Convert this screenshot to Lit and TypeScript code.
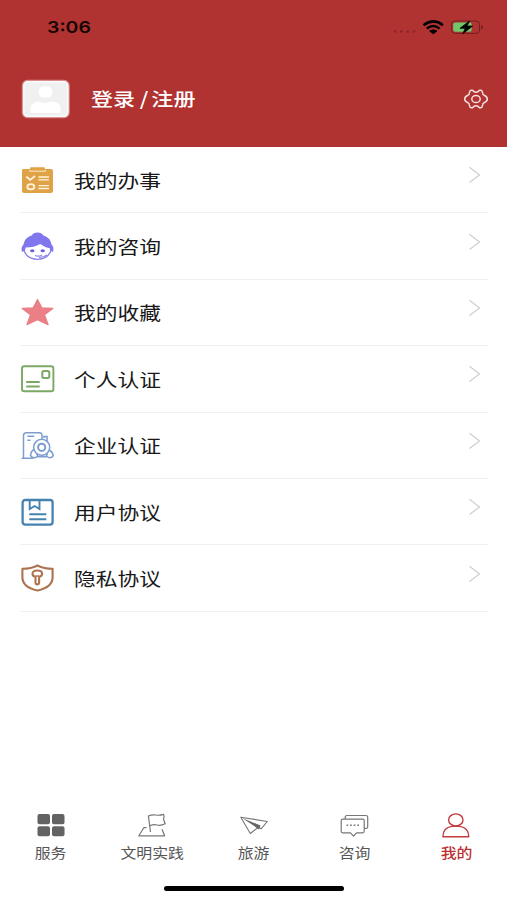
import { LitElement, html, svg, css } from "lit";
import { customElement, property } from "lit/decorators.js";

const rowIcons: Record<string, unknown> = {
  tasks: svg`<path fill="#dfa247" d="M3 4h7v2h15V4h6q2 0 2 2v20q0 2-2 2H4q-2 0-2-2V6q0-2 1-2z"/>
    <rect x="10" y="2.2" width="15" height="3.600" rx="1" fill="#dfa247"/>
    <path d="M9.500 5v1.500h16V5" fill="none" stroke="#f6dfb8" stroke-width=".8"/>
    <g fill="none" stroke="#fff3dc" stroke-width="1.800"><path d="M6.200 11.500l4 3.400L15 11"/><ellipse cx="10.800" cy="21.800" rx="3.500" ry="2.600"/>
    <path stroke-width="1.300" d="M18.500 12h10.500M18.500 14.900h10.500M18.500 20.600h10.500M18.500 23.500h10.500"/></g>`,
  advisor: svg`<path d="M4.500 17v4q1 1 2 3 4 4.300 11 4.300T28.500 24q1-2 2-3v-4" fill="#fff" stroke="#8b82ea" stroke-width="1.200"/>
    <path fill="#8076ee" d="M2 20.800Q.6 16.500 3.500 13.500 4.500 6.500 12 4.200 13.200 1.400 17.500 1.400T23 4.200Q30.500 6.500 31.500 13.500q2.900 3 1.500 7.300-2.300.2-2.800-3.300-5.200-1-10-4.500Q14 16.500 5.600 16.500 5 21 2 20.800z"/>
    <g fill="#6a5fe0"><ellipse cx="12.300" cy="19.700" rx="2.200" ry="1.500"/><ellipse cx="22.700" cy="19.700" rx="2.200" ry="1.500"/></g>
    <path d="M15 24.500q3.500 1.600 7-.6M19 26.500q5-.3 8-2.500" fill="none" stroke="#8b82ea" stroke-width="1.200"/>`,
  star: svg`<path fill="#ea7f86" stroke="#ea7f86" stroke-width="1.200" stroke-linejoin="round" d="M17.500 2.400l4.300 8.400 11 .6-8.300 6.400 3.600 9.800-10.600-4.800L6.900 27.600l3.600-9.800-8.300-6.400 11-.6z"/>`,
  card: svg`<g fill="none" stroke="#7ca765"><rect x="2" y="2.300" width="31.400" height="25" rx="2.300" stroke-width="1.900"/>
    <rect x="22.300" y="7" width="7" height="7" rx="1.700" stroke-width="2"/><path stroke-width="1.900" d="M6.200 18h13.500M6.200 22.500h13.500"/></g>`,
  company: svg`<g fill="none" stroke="#7c9dce" stroke-width="1.500"><path d="M1.700 28.300h11.500M3.500 28V5.500Q3.500 2.800 6.500 2.800h13q2.500 0 2.500 3.200v3M7.300 6.300h7M7.300 10.300h3.200M24 8V6.500h3V11"/>
    <circle cx="21.700" cy="17.300" r="8" fill="#fff"/><circle cx="21.700" cy="17.300" r="3.600" stroke-width="2"/>
    <path d="M14 19.500q-3 1.500-3.500 6 2.500 3.800 6.700 1.200.8-1.500-.7-3M29.300 20q3.500 2 4 5.800-2.800 3.500-6.500.7-.6-1.500.7-3M17.500 26.800h9"/></g>`,
  book: svg`<g fill="none" stroke="#4682b0"><rect x="2.600" y="3" width="30" height="24.600" rx="2.500" stroke-width="2.300"/>
    <path stroke-width="1.900" d="M9.700 3.500v8.500l4.900-3 4.900 3V3.500"/><path stroke-width="1.900" d="M9.300 17.300h17M9.300 22.200h17"/></g>`,
  shield: svg`<g fill="none" stroke="#ad7350"><path stroke-width="2.100" stroke-linejoin="round" d="M17.500 2.500Q11 5.800 2.400 5.800v8.400q0 10 15.100 13.300 15.100-3.300 15.100-13.300V5.800q-8.600 0-15.100-3.300z"/>
    <path stroke-width="2.100" stroke-linejoin="round" d="M15.500 14q-3-.8-3-3.200 0-3.300 4.800-3.300t4.800 3.300q0 2.400-3 3.200v6q-.3 1.400-1.800 1.400t-1.800-1.400z"/><path stroke-width="1.500" d="M15.300 13h4"/></g>`,
};

const tabIcons: Record<string, unknown> = {
  grid: svg`<g fill="#636363"><rect x="2.500" y="2" width="12.500" height="10.300" rx="2"/><rect x="17" y="2" width="12.500" height="10.300" rx="2"/><rect x="2.500" y="14.300" width="12.500" height="10" rx="2"/><rect x="17" y="14.300" width="12.500" height="10" rx="2"/></g>`,
  flag: svg`<g fill="none" stroke="#777" stroke-width="1.200" stroke-linejoin="round"><path d="M14.500 20L12.400 4Q16 2.300 19.500 3t8.200-.6q.7 2.700-.2 4.800l1.700 4.600Q24.500 14 21 13t-7.300 1"/><path d="M10.500 15.700H7.800L2.800 23.800h25.800L26 17.300"/></g>`,
  plane: svg`<g fill="none" stroke="#777" stroke-width="1.100" stroke-linejoin="round"><path d="M2.800 5.200l26.500 4.300-6 7.200-3.300-1.200-7.700 6z"/></g><path d="M4 5.900l18.500 7.600-1.500 4-7-5z" fill="#666"/>`,
  chat: svg`<g fill="none" stroke="#777" stroke-width="1.200" stroke-linejoin="round"><path d="M3.700 7.200h20q1.500 0 1.500 1.500v10.600q0 1.500-1.500 1.500h-6.200l-3 3.300-3-3.300H3.700q-1.500 0-1.500-1.500V8.700q0-1.500 1.500-1.500zM6.200 7V5.300q0-1.800 2-1.800h18.600q1.900 0 1.900 1.600v9.800q0 1.500-1.900 1.500h-1.400"/></g><path d="M7.500 13.300h13" stroke="#777" stroke-width="1.600" stroke-dasharray="1.700 1.900"/>`,
  person: svg`<g fill="none" stroke="#c03c3f" stroke-width="1.400" stroke-linejoin="round"><ellipse cx="15.800" cy="7.900" rx="7.200" ry="6"/><path d="M2.900 24.700Q3 15.500 11.800 14.400h8Q28.600 15.500 28.800 24.700z"/></g>`,
};

@customElement("menu-row")
class MenuRow extends LitElement {
  @property() icon = "";
  @property() label = "";
  static styles = css`
    :host { display: flex; height: 66.4px; box-sizing: border-box; border-bottom: 1px solid #f0f0f0; align-items: center; }
    .icon { flex: none; width: 34px; height: 30px; overflow: visible; }
    .label { flex: 1; margin-left: 20px; font-size: 18.5px; line-height: 28px; color: #181818; white-space: nowrap; }
    .stretch { display: inline-block; transform: scaleX(1.176); transform-origin: left; }
    .chevron { width: 14px; height: 18px; margin: 0 6px 9px 0; }
  `;
  render() {
    return html`<svg class="icon" viewBox="0 0 34 30">${rowIcons[this.icon]}</svg>
      <div class="label"><span class="stretch">${this.label}</span></div>
      <svg class="chevron" viewBox="0 0 14 18"><path d="M1.500 1.200L11.500 9 1.500 16.600" fill="none" stroke="#cfcfcf" stroke-width="1.200"/></svg>`;
  }
}

@customElement("tab-item")
class TabItem extends LitElement {
  @property() icon = "";
  @property() label = "";
  static styles = css`
    :host { display: flex; flex: 1; flex-direction: column; align-items: center; color: #555; }
    :host([active]) { color: #bd3034; }
    svg { width: 32px; height: 27px; }
    .label { font-size: 13.6px; line-height: 20px; margin-top: 3px; white-space: nowrap; transform: scaleX(1.17); }
    :host([active]) .label { font-weight: 500; }
  `;
  render() {
    return html`<svg viewBox="0 0 32 27">${tabIcons[this.icon]}</svg><div class="label">${this.label}</div>`;
  }
}

@customElement("app-root")
class AppRoot extends LitElement {
  static styles = css`
    :host { display: flex; flex-direction: column; width: 507px; height: 900px; overflow: hidden; background: #fff; font-family: "Noto Sans CJK SC", sans-serif; }
    .top { height: 147px; flex: none; background: #b03331; }
    .status { height: 54px; display: flex; align-items: center; justify-content: space-between; padding: 0 25px 0 46.500px; box-sizing: border-box; }
    .time { font: 600 16.5px/20px Inter, sans-serif; color: #160504; transform: scaleX(1.18); transform-origin: left; }
    .signals { width: 92px; height: 20px; overflow: visible; }
    .profile { display: flex; align-items: center; height: 89px; padding: 0 18px 0 21px; }
    .avatar { width: 50px; height: 40px; }
    .login { flex: 1; margin: 0 0 2px 20px; color: #fff; font-size: 18.5px; line-height: 28px; font-weight: 500; white-space: nowrap; }
    .stretch { display: inline-block; transform: scaleX(1.19); transform-origin: left; }
    .slash { margin: 0 2.500px 0 4px; }
    .gear { width: 26px; height: 22px; }
    .menu { padding: 0 19px 0 20px; flex: 1; }
    .tabs { display: flex; height: 74px; flex: none; }
    .home { height: 14px; flex: none; display: flex; justify-content: center; }
    .bar { width: 180px; height: 5px; margin-left: 1px; border-radius: 3px; background: #000; }
  `;
  rows = [
    ["tasks", "我的办事"], ["advisor", "我的咨询"], ["star", "我的收藏"], ["card", "个人认证"],
    ["company", "企业认证"], ["book", "用户协议"], ["shield", "隐私协议"],
  ];
  tabs = [["grid", "服务"], ["flag", "文明实践"], ["plane", "旅游"], ["chat", "咨询"], ["person", "我的"]];
  render() {
    return html`
      <header class="top">
        <div class="status">
          <span class="time">3:06</span>
          <svg class="signals" viewBox="0 0 92 20">
            <g fill="#8a2625"><circle cx="5" cy="14.500" r="1.300"/><circle cx="11.300" cy="14.500" r="1.300"/><circle cx="17.700" cy="14.500" r="1.300"/><circle cx="24" cy="14.500" r="1.300"/></g>
            <g fill="none" stroke="#000" stroke-width="2.500"><path d="M33.500 8.200q10-7.600 19.400 0"/><path d="M36.800 11.600q6.500-5.200 12.800 0"/></g>
            <path d="M39.600 14q3.800-2.400 7.400 0l-3.700 2.800z" stroke="#000" stroke-width=".8"/>
            <rect x="61.500" y="4" width="28" height="12.400" rx="3.500" fill="none" stroke="#702020" stroke-width="1"/>
            <path d="M91 8q1.800.4 1.800 2.200T91 12.400z" fill="#702020"/>
            <rect x="63.200" y="5.600" width="18.500" height="9.200" rx="2" fill="#72c66b"/>
            <path d="M79.500 4L70 11.300h5.300l-2.500 5.500 9.700-7.700H77z" fill="#000" stroke="#000" stroke-width=".8"/>
          </svg>
        </div>
        <div class="profile">
          <svg class="avatar" viewBox="0 0 50 40">
            <rect x="1.500" y="1.500" width="46.500" height="37" rx="5" fill="#efefef" stroke="#d88f8e" stroke-width="1.500"/>
            <rect x="2.800" y="2.800" width="44" height="34.500" rx="4" fill="#f0f0f0" stroke="#fafafa" stroke-width="1.500"/>
            <path fill="#fff" d="M17.500 13q.5-4.500 3.500-5.500h7q3 1 3.500 5.500-.5 4.500-3.500 5.500h-7q-3-1-3.500-5.500zM9.500 34v-4q0-7 8-7.500l6.500 1.500 7.500-1.500q8 .5 8 7.500v4z"/>
          </svg>
          <div class="login"><span class="stretch">登录<span class="slash">/</span>注册</span></div>
          <svg class="gear" viewBox="0 0 26 22"><g fill="none" stroke="#f6dfdf" stroke-width="1.500" stroke-linejoin="round">
            <path d="M8 2.200h1.500Q11 4.200 13 4.200T16.500 2.200H18Q19.500 2.800 19.500 4.500 19.600 7 21.500 7.500 24.300 8.800 24.300 11 24.300 13.200 21.500 14.500 19.600 15 19.500 17.500 19.500 19.200 18 19.800H16.500Q15 17.800 13 17.800T9.500 19.800H8Q6.500 19.200 6.500 17.500 6.400 15 4.500 14.500 1.700 13.200 1.700 11 1.700 8.800 4.500 7.500 6.400 7 6.500 4.500 6.500 2.800 8 2.200z"/>
            <ellipse cx="13" cy="11" rx="4.200" ry="3.600"/></g></svg>
        </div>
      </header>
      <main class="menu">${this.rows.map(([i, l]) => html`<menu-row .icon=${i} .label=${l}></menu-row>`)}</main>
      <nav class="tabs">${this.tabs.map(([i, l]) => html`<tab-item .icon=${i} .label=${l} ?active=${i === "person"}></tab-item>`)}</nav>
      <div class="home"><div class="bar"></div></div>`;
  }
}
